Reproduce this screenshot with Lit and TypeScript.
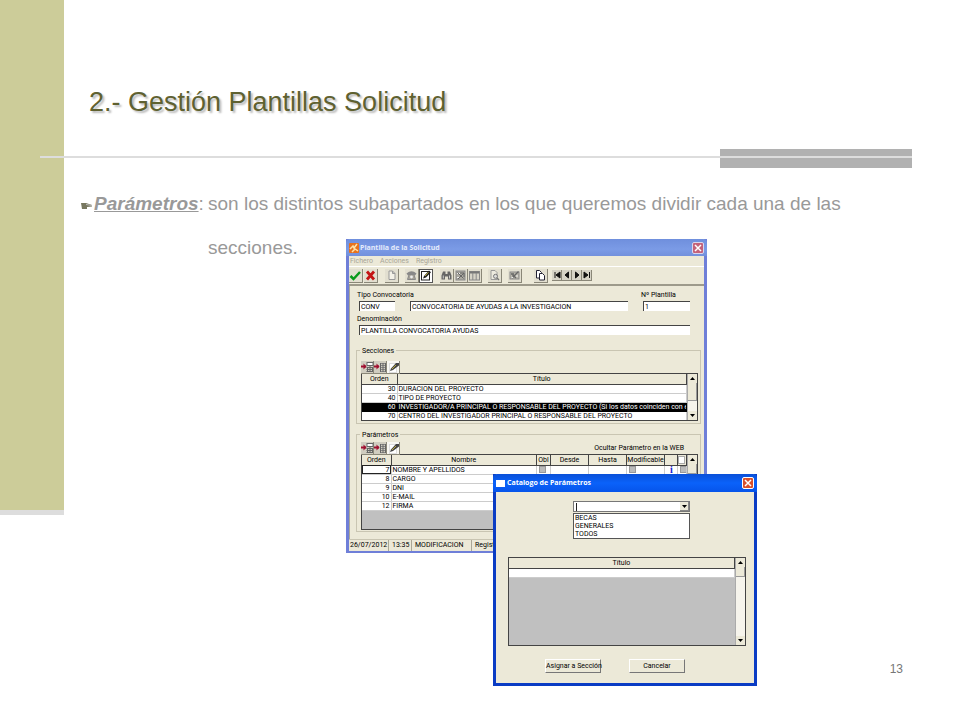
import { LitElement, html, svg, css, TemplateResult } from "lit";
import { customElement } from "lit/decorators.js";
import { classMap } from "lit/directives/class-map.js";

const shared = css`
  * { box-sizing: border-box; }
  button, input, select { font: inherit; color: inherit; margin: 0; padding: 0; border-radius: 0; }
  svg { display: block; }
  .win {
    font-family: Roboto, "Liberation Sans", sans-serif;
    font-size: 7px;
    line-height: 10px;
    color: #000;
    background: #ece9d8;
    display: flex;
    flex-direction: column;
  }
  .title {
    display: flex;
    align-items: center;
    gap: 2px;
    height: 17px;
    padding: 0 2px;
    color: #fff;
    font: bold 7px/8px "Open Sans", sans-serif;
  }
  .title h2 { font: inherit; margin: 0; flex: 1; white-space: nowrap; }
  .close {
    width: 12px; height: 12px; border: 1px solid #fff; border-radius: 2px;
    background: #d9502c; display: grid; place-items: center;
  }
  .grid-box { display: flex; border: 1px solid #444; background: #c0c0c0; overflow: hidden; }
  .grid-main { flex: 1; min-width: 0; }
  table { width: 100%; border-collapse: collapse; table-layout: fixed; }
  th {
    font-weight: normal; padding: 0; height: 10px; line-height: 8px; background: #ece9d8;
    border-bottom: 1px solid #444; border-right: 1px solid #444; overflow: hidden; white-space: nowrap;
  }
  td {
    padding: 0 0 0 1px; height: 9px; line-height: 8px; background: #fff;
    border-bottom: 1px solid #ccc; border-right: 1px solid #ccc; overflow: hidden; white-space: nowrap;
  }
  td.num { text-align: right; padding: 0 1px 0 0; }
`;

const cross = (c: string, s = 8) => svg`<svg width=${s} height=${s} viewBox="0 0 8 8"><path d="M1 1L7 7M7 1L1 7" stroke=${c} stroke-width="1.5"/></svg>`;

@customElement("scroll-bar")
export class ScrollBar extends LitElement {
  static styles = css`
    :host { display: flex; flex-direction: column; width: 10px; background: #f6f4ec; border-left: 1px solid #aaa; }
    .arrow { height: 9px; padding: 0; border: 0; background: #ece9d8; display: grid; place-items: center; }
    .track { flex: 1; }
    .thumb { height: 9px; background: #ece9d8; border-right: 1px solid #999; border-bottom: 1px solid #999; }
    :host([low]) .thumb { height: 17px; }
  `;
  render() {
    return html`
      <button class="arrow" aria-label="Subir"><svg width="5" height="3"><path d="M0 3L2.5 0L5 3Z"/></svg></button>
      <div class="track"><div class="thumb"></div></div>
      <button class="arrow" aria-label="Bajar"><svg width="5" height="3"><path d="M0 0L2.5 3L5 0Z"/></svg></button>`;
  }
}

const shapes: Record<string, TemplateResult> = {
  check: svg`<path d="M1.500 7L4.500 10L11 3" fill="none" stroke="#0a9a1c" stroke-width="2.500"/>`,
  cancel: svg`<path d="M3 2.500L10 10.500M10 2.500L3 10.500" fill="none" stroke="#c41414" stroke-width="2.800"/>`,
  doc: svg`<path d="M4 2H7.500L10 4.500V10.500H4ZM7.500 2V4.500H10" fill="#f4f2e8" stroke="#999"/>`,
  phone: svg`<path d="M1.500 4.500Q6.500 0 11.500 4.500L10 6.500L8 5H5L3 6.500Z" fill="#888"/><path d="M4 5.500H9L10.500 10.500H2.500Z" fill="#a5a298" stroke="#888"/><circle cx="6.500" cy="8" r="1.400" fill="#eee"/>`,
  edit: svg`<rect x="2.500" y="2.500" width="8" height="8.500" fill="#fff" stroke="#222"/><path d="M4 9.500L5 7L10 1.500L12 3.200L7 8.500Z" fill="#222"/><path d="M6 7L9.500 3.300" stroke="#b8a940"/>`,
  find: svg`<path d="M1.500 10.500V6.500L3 2.500H5.500V5H7.500V2.500H10L11.500 6.500V10.500H8V7.500H5V10.500Z" fill="#666"/><path d="M3.300 6.500V9.500M9.500 6.500V9.500" stroke="#ccc"/>`,
  next: svg`<rect x="2" y="2" width="9" height="9" fill="#aaa8a0" stroke="#888"/><path d="M3 4.500H6M3 8.500H5" stroke="#eee"/><path d="M4 10L10 4M6 4H10V8M3.500 3.500L9.500 9.500" stroke="#666" fill="none"/>`,
  table: svg`<rect x="1.500" y="2.500" width="10" height="8.500" fill="#d6d3c7" stroke="#888"/><path d="M2 3.500H11" stroke="#777" stroke-width="2"/><path d="M4.800 4V11M8.200 4V11" stroke="#888"/>`,
  preview: svg`<path d="M3 1.500H7L9 3.500V10.500H3Z" fill="#eceadf" stroke="#999"/><circle cx="7.500" cy="7.300" r="2" fill="#ddd" stroke="#777"/><path d="M9 9L11 11" stroke="#777" stroke-width="1.500"/>`,
  tool: svg`<rect x="2" y="3" width="9" height="7" fill="#bbb8ac" stroke="#888"/><path d="M3 5H6M4 9L10.500 2.500M4.500 6L8 9" stroke="#666" stroke-width="1.300"/><path d="M3.500 8.500H5M8 7H10" stroke="#eee"/>`,
  copy: svg`<path d="M2.500 1.500H5.500L7.500 3.500V9H2.500Z" fill="#fff" stroke="#223"/><path d="M5.500 4.500H8.500L10.500 6.500V11H5.500Z" fill="#fff" stroke="#223"/>`,
  rowadd: svg`<path d="M0 5.500H5" stroke="#a01030" stroke-width="2"/><path d="M2.500 2.500V8.500L5.500 5.500Z" fill="#a01030"/><rect x="6" y="1.500" width="6" height="3" fill="#fff" stroke="#666"/><path d="M5.500 6.500H12M5.500 8.500H12M5.500 10.500H12M6.500 6V11M9 5V11M11.500 6V11" stroke="#666"/>`,
  rowins: svg`<path d="M0 5.500H5" stroke="#a01030" stroke-width="2"/><path d="M2.500 2.500V8.500L5.500 5.500Z" fill="#a01030"/><path d="M6 2.500H12M6 4.500H12M6 6.500H12M6 8.500H12M6 10.500H12" stroke="#888"/><path d="M6.500 2V11M9 2V11M11.500 2V11" stroke="#666"/>`,
  pen: svg`<rect x="2.500" y="2.500" width="7" height="9" fill="#fff" stroke="#ddd"/><path d="M3 10L4 7.500L9 2H12V4.500L6 9Z" fill="#444"/><path d="M5 8L9 4" stroke="#b8a940"/>`,
  first: svg`<path d="M3 2V8M8 2V8L4 5Z" fill="#111" stroke="#111"/>`,
  prev: svg`<path d="M6.500 2V8L3 5Z" fill="#111" stroke="#111"/>`,
  fwd: svg`<path d="M3.500 2V8L7 5Z" fill="#111" stroke="#111"/>`,
  last: svg`<path d="M2 2V8L6 5ZM7.500 2V8" fill="#111" stroke="#111"/>`,
};
const icon = (name: string, size = 13) => svg`<svg width=${size} height=${size} viewBox="0 0 ${size} ${size}" aria-hidden="true">${shapes[name]}</svg>`;

@customElement("template-window")
export class TemplateWindow extends LitElement {
  static styles = [shared, css`
    :host { display: block; }
    .win { border: solid #6f7fd8; border-width: 0 3px 2px 3px; height: 314px; }
    .title { background: linear-gradient(#6f8fdd, #7b9be6 60%, #7290dc); color: #e4ebfb; margin: 0 -3px; padding: 0 3px; gap: 1px; border-radius: 4px 4px 0 0; }
    .close { background: #c4627a; border-color: #d9d6ee; }
    nav { display: flex; gap: 7px; height: 11px; padding: 0 1px; border-bottom: 1px solid #fff; }
    nav a { color: #a8a597; text-decoration: none; }
    .bar { display: flex; align-items: center; height: 19px; border-bottom: 2px solid #9d9a8b; gap: 1px; }
    .set { display: flex; }
    .set.a { gap: 1px; } .set.b { margin-left: 6px; } .set.c { margin-left: 5px; }
    .set.e { margin-left: 11px; } .set.f { margin-left: 3px; }
    .tool { width: 14px; height: 14px; border: solid; border-width: 0 1px 1px 0; border-color: #8a8778; background: #e2dfd0; }
    .tool.pressed { border: 1px solid #555; background: #fff; }
    .tool.pressed svg { margin: -1px; }
    .tool.nav { width: 10px; height: 11px; background: #d6d3c6; }
    .body { flex: 1; padding: 4px 4px 0 8px; border-left: 1px solid #aaa797; }
    .row { display: flex; align-items: flex-end; gap: 15px; margin-left: 1px; margin-right: 10px; }
    .field { display: flex; flex-direction: column; }
    .field input { width: 100%; height: 10px; border: solid #444; border-width: 1px 0 0 1px; background: #fff; padding-left: 1px; line-height: 8px; }
    .field label { height: 11px; margin-left: -2px; white-space: nowrap; }
    .code { width: 36px; } .desc { flex: 1; } .numb { width: 47px; }
    .row + .row { margin-top: 3px; }
    .group { position: relative; border: 1px solid #c9c5b2; margin: 0 -1px 0 -2px; padding: 10px 2px 2px 4px; }
    .group.s { margin-top: 15px; height: 74px; }
    .group.p { margin-top: 10px; height: 98px; padding-top: 7px; }
    .group h3 { position: absolute; top: -5px; left: 3px; padding: 0 2px; margin: 0; font: inherit; background: #ece9d8; }
    .icons { display: flex; height: 12px; }
    .icons .tool { width: 13px; height: 13px; background: #d0cdc0; }
    .icons .tool:last-of-type { background: #f8f7f2; }
    .icons p { margin: 1px 14px 0 auto; }
    .group.s .grid-box { height: 48px; }
    .group.p .grid-box { height: 76px; }
    tr.on td { background: #000; color: #fff; border-color: #000; }
    .co { width: 35px; } .cp { width: 29px; } .cb { width: 14px; } .cd { width: 38px; } .ci { width: 13px; } .cc { width: 9px; }
    td.focus { outline: 1px solid #222; outline-offset: -1px; }
    td input { appearance: none; display: block; width: 7px; height: 7px; margin: 0 0 0 1px; background: #bbb; border: 1px solid #999; }
    th input { appearance: none; display: block; width: 7px; height: 8px; background: #fff; border: 1px solid #aaa; }
    td.info { color: #1420d0; font: bold 10px/8px "Liberation Serif", serif; text-align: center; }
    .status { display: flex; gap: 2px; height: 12px; border-top: 1px solid #c9c5b2; }
    .status span { border-right: 1px solid #aaa797; padding: 0 1px; white-space: nowrap; }
    .s1 { width: 40px; } .s2 { width: 21px; } .s3 { width: 58px; }
  `];
  tool(name: string, label: string, pressed = false) {
    return html`<button class=${classMap({ tool: true, pressed })} aria-label=${label}>${icon(name)}</button>`;
  }
  navBtn(name: string, label: string) {
    return html`<button class="tool nav" aria-label=${label}>${icon(name, 10)}</button>`;
  }
  tableTools(note?: string) {
    return html`<div class="icons">${this.tool("rowadd", "Añadir")}${this.tool("rowins", "Insertar")}${this.tool("pen", "Editar")}${note ? html`<p>${note}</p>` : ""}</div>`;
  }
  render() {
    const sections: [string, string][] = [
      ["30", "DURACION DEL PROYECTO"], ["40", "TIPO DE PROYECTO"],
      ["60", "INVESTIGADOR/A PRINCIPAL O RESPONSABLE DEL PROYECTO (Si los datos coinciden con el solici"],
      ["70", "CENTRO DEL INVESTIGADOR PRINCIPAL O RESPONSABLE DEL PROYECTO"],
    ];
    const params: [string, string][] = [["7", "NOMBRE Y APELLIDOS"], ["8", "CARGO"], ["9", "DNI"], ["10", "E-MAIL"], ["12", "FIRMA"]];
    return html`<section class="win">
      <header class="title">
        <svg width="10" height="10" aria-hidden="true"><rect width="10" height="10" rx="1" fill="#e8721c"/><path d="M1 6L4 3L5 5L8 1M3 9L6 6L9 8" stroke="#ffe2a8" stroke-width="1.500" fill="none"/></svg>
        <h2>Plantilla de la Solicitud</h2>
        <button class="close" aria-label="Cerrar">${cross("#fff")}</button>
      </header>
      <nav><a href="#">Fichero</a><a href="#">Acciones</a><a href="#">Registro</a></nav>
      <div class="bar">
        <div class="set a">${this.tool("check", "Aceptar")}${this.tool("cancel", "Cancelar")}</div>
        <div class="set b">${this.tool("doc", "Nuevo")}</div>
        <div class="set c">${this.tool("phone", "Contacto")}${this.tool("edit", "Modificar", true)}</div>
        <div class="set b">${this.tool("find", "Buscar")}${this.tool("next", "Siguiente")}${this.tool("table", "Tabla")}</div>
        <div class="set c">${this.tool("preview", "Vista previa")}</div>
        <div class="set c">${this.tool("tool", "Opciones")}</div>
        <div class="set e">${this.tool("copy", "Copiar")}</div>
        <div class="set f">${this.navBtn("first", "Primero")}${this.navBtn("prev", "Anterior")}${this.navBtn("fwd", "Siguiente")}${this.navBtn("last", "Último")}</div>
      </div>
      <div class="body">
        <div class="row">
          <div class="field code"><label for="tipo">Tipo Convocatoria</label><input id="tipo" value="CONV"></div>
          <div class="field desc"><input aria-label="Tipo Convocatoria" value="CONVOCATORIA DE AYUDAS A LA INVESTIGACION"></div>
          <div class="field numb"><label for="num">Nº Plantilla</label><input id="num" value="1"></div>
        </div>
        <div class="row"><div class="field desc"><label for="den">Denominación</label><input id="den" value="PLANTILLA CONVOCATORIA AYUDAS"></div></div>
        <div class="group s"><h3>Secciones</h3>
          ${this.tableTools()}
          <div class="grid-box"><div class="grid-main"><table>
            <colgroup><col class="co"><col></colgroup>
            <thead><tr><th>Orden</th><th>Título</th></tr></thead>
            <tbody>${sections.map(([n, t]) => html`<tr class=${classMap({ on: n === "60" })}><td class="num">${n}</td><td>${t}</td></tr>`)}</tbody>
          </table></div><scroll-bar low></scroll-bar></div>
        </div>
        <div class="group p"><h3>Parámetros</h3>
          ${this.tableTools("Ocultar Parámetro en la WEB")}
          <div class="grid-box"><div class="grid-main"><table>
            <colgroup><col class="cp"><col><col class="cb"><col class="cd"><col class="cd"><col class="cd"><col class="ci"><col class="cc"></colgroup>
            <thead><tr><th>Orden</th><th>Nombre</th><th>Obl</th><th>Desde</th><th>Hasta</th><th>Modificable</th><th></th><th><input type="checkbox" aria-label="Ocultar todos"></th></tr></thead>
            <tbody>${params.map(([n, t], i) => html`<tr><td class=${classMap({ num: true, focus: i === 0 })}>${n}</td><td>${t}</td>
              <td><input type="checkbox" aria-label="Obligatorio"></td><td></td><td></td>
              <td><input type="checkbox" aria-label="Modificable"></td><td class="info">${i === 0 ? "i" : ""}</td><td><input type="checkbox" aria-label="Ocultar"></td></tr>`)}</tbody>
          </table></div><scroll-bar></scroll-bar></div>
        </div>
      </div>
      <footer class="status"><span class="s1">26/07/2012</span><span class="s2">13:35</span><span class="s3">MODIFICACION</span><span>Regist</span></footer>
    </section>`;
  }
}

@customElement("catalog-window")
export class CatalogWindow extends LitElement {
  static styles = [shared, css`
    :host { display: block; }
    .win { border: solid #0a3cc4; border-width: 0 3px 3px 3px; height: 212px; }
    .title { background: linear-gradient(#0a50d8, #0a62fa 50%, #0654ea); height: 18px; margin: 0 -3px; padding: 0 3px; border-radius: 4px 4px 0 0; }
    .body { flex: 1; padding: 9px 8px 0 12px; display: flex; flex-direction: column; }
    .combo { position: relative; width: 117px; margin-left: 65px; }
    .combo::before { content: ""; position: absolute; left: 3px; top: 2px; width: 1px; height: 8px; background: #222; }
    select { appearance: none; display: block; width: 100%; height: 11px; border: 1px solid #777; background: #fff; }
    .drop { position: absolute; right: 1px; top: 1px; width: 9px; height: 9px; background: #ece9d8; border: solid #888; border-width: 0 1px 1px 0; display: grid; place-items: center; pointer-events: none; }
    ul { list-style: none; margin: 1px 0 0; padding: 0 1px; border: 1px solid #555; background: #fff; line-height: 8px; }
    .grid-box { margin-top: 18px; height: 89px; }
    .actions { display: flex; gap: 28px; margin: 13px 0 0 37px; }
    .actions button { width: 56px; height: 14px; border: 1px solid; border-color: #fff #777 #777 #fff; background: #ece9d8; line-height: 8px; text-align: center; white-space: nowrap; }
  `];
  render() {
    return html`<section class="win">
      <header class="title">
        <svg width="9" height="7" aria-hidden="true"><rect width="9" height="7" fill="#fff"/></svg>
        <h2>Catalogo de Parámetros</h2>
        <button class="close" aria-label="Cerrar">${cross("#fff")}</button>
      </header>
      <div class="body">
        <div class="combo">
          <select aria-label="Tipo de parámetro"><option></option></select>
          <span class="drop"><svg width="5" height="3"><path d="M0 0L2.500 3L5 0Z"/></svg></span>
          <ul role="listbox" aria-label="Tipos">${["BECAS", "GENERALES", "TODOS"].map((t) => html`<li role="option">${t}</li>`)}</ul>
        </div>
        <div class="grid-box"><div class="grid-main"><table><thead><tr><th>Título</th></tr></thead><tbody><tr><td></td></tr></tbody></table></div><scroll-bar></scroll-bar></div>
        <div class="actions"><button>Asignar a Sección</button><button>Cancelar</button></div>
      </div>
    </section>`;
  }
}

@customElement("app-root")
export class AppRoot extends LitElement {
  static styles = css`
    :host { display: block; background: #fff; font-family: "Liberation Sans", Arial, sans-serif; }
    .slide { position: relative; display: grid; grid-template-columns: 64px 1fr; min-height: 100vh; }
    .band { height: 510px; background: #cc9; border-bottom: 5px solid #ddd; }
    main { display: flex; flex-direction: column; }
    h1 { margin: 84px 0 0 25px; font-weight: normal; font-size: 27px; line-height: 36px; color: #5f6130; text-shadow: 2px 2px 2px #bbb; }
    .rule { position: relative; display: flex; align-items: center; justify-content: flex-end; height: 19px; margin: 29px 48px 0 -24px; }
    .rule::before { content: ""; position: absolute; left: 0; right: 0; top: 7px; height: 2px; background: #ddd; }
    .block { width: 22%; height: 19px; background: #b1b1b1; }
    .text { display: flex; align-items: flex-start; margin: 14px 48px 0 17px; font-size: 19px; line-height: 44px; color: #999; }
    .text svg { margin: 20px 1px 0 0; }
    .term { width: 114px; white-space: nowrap; }
    .term em { font-weight: bold; text-decoration: underline; }
    .text p { margin: 0; flex: 1; }
    .page { position: absolute; right: 57px; bottom: 43px; font-size: 12px; line-height: 16px; color: #777; }
    template-window { position: absolute; left: 346px; top: 239px; width: 361px; }
    catalog-window { position: absolute; left: 493px; top: 474px; width: 264px; }
  `;
  render() {
    return html`<div class="slide">
      <div class="band"></div>
      <main>
        <h1>2.- Gestión Plantillas Solicitud</h1>
        <div class="rule"><div class="block"></div></div>
        <div class="text">
          <svg width="12" height="8" aria-hidden="true"><path d="M0 1H5L11 3V4.500L6 5V7H1Z" fill="#77775f"/><path d="M5 2.500L11 3.500" stroke="#bbb"/></svg>
          <span class="term"><em>Parámetros</em>:</span>
          <p>son los distintos subapartados en los que queremos dividir cada una de las<br>secciones.</p>
        </div>
      </main>
      <template-window></template-window>
      <catalog-window></catalog-window>
      <span class="page">13</span>
    </div>`;
  }
}
